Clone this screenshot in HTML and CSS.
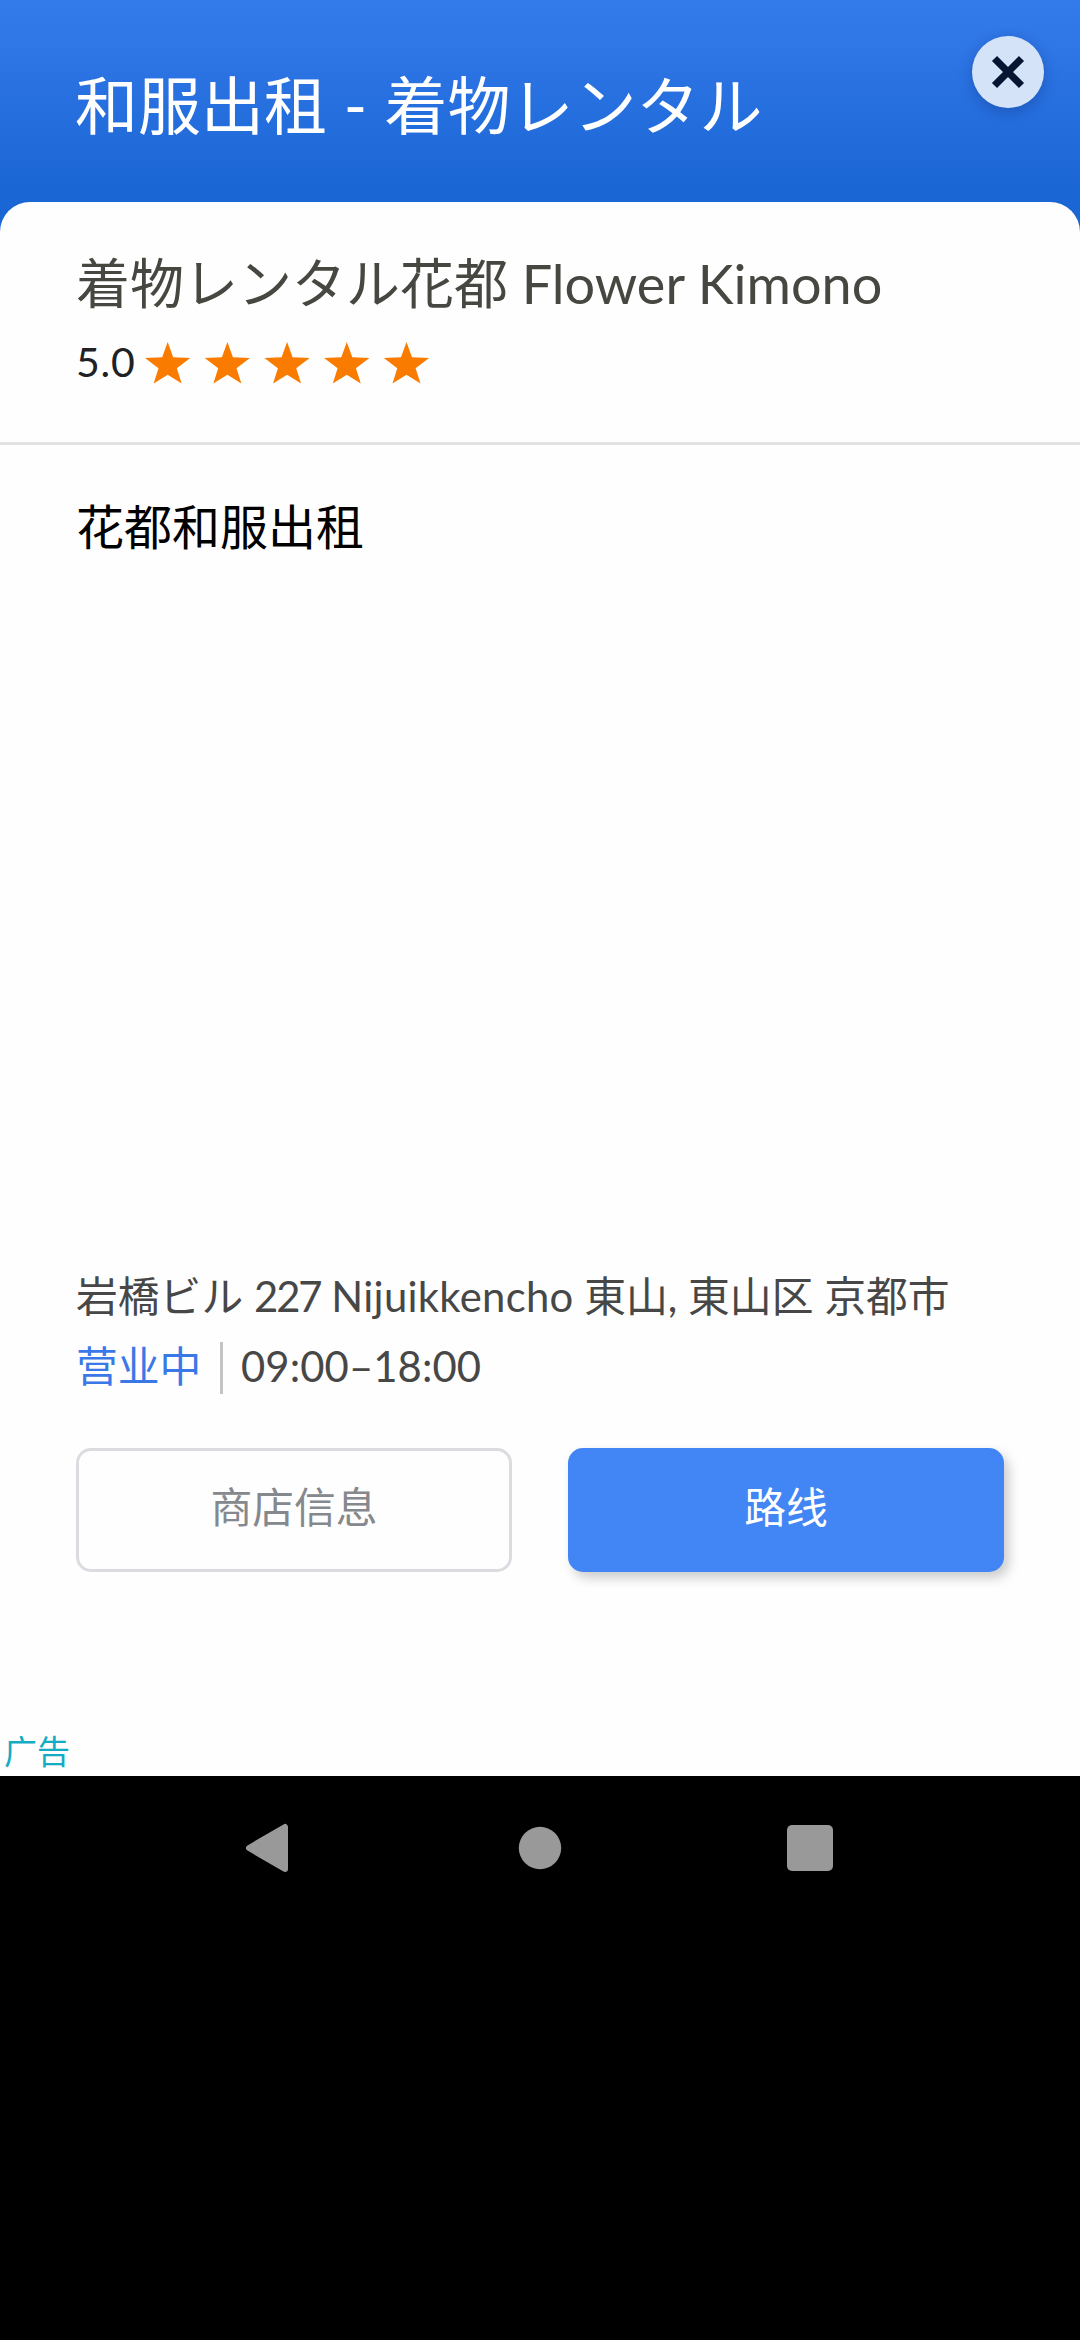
FILE: index.html
```html
<!DOCTYPE html>
<html lang="zh-CN">
<head>
<meta charset="utf-8">
<title>和服出租 - 着物レンタル</title>
<link rel="stylesheet" href="styles.css">
</head>
<body>
<main class="ad">
  <header class="header">
    <h1 class="title">和服出租<span class="dash"> - </span>着物レンタル</h1>
    <button class="close" aria-label="关闭"><svg width="72" height="72" viewBox="0 0 72 72"><path d="M22.500 22.500L49.500 49.500M49.500 22.500L22.500 49.500" stroke="#061632" stroke-width="7.200"/></svg></button>
  </header>
  <section class="card">
    <div class="shop">
      <h2 class="name"><span lang="ja">着物レンタル花都</span> Flower Kimono</h2>
      <div class="rating">
        <span class="score">5.0</span>
        <svg class="stars" width="286" height="42" viewBox="0 0 286 42" fill="#f97c00">
          <defs><path id="star" d="M22.700 0L28.200 15.300L45.300 16L31.800 26.200L36.700 41.500L22.700 32.800L8.700 41.500L13.500 26.200L0 16L17.200 15.300Z"/></defs>
          <use href="#star"/><use href="#star" x="59.700"/><use href="#star" x="119.400"/><use href="#star" x="179.100"/><use href="#star" x="238.800"/>
        </svg>
      </div>
    </div>
    <p class="description">花都和服出租</p>
    <div class="details">
      <p class="address" lang="ja">岩橋ビル <span class="number">227</span> <span class="street">Nijuikkencho</span> 東山, 東山区 京都市</p>
      <div class="hours"><span class="open">营业中</span><span class="time">09:00–18:00</span></div>
      <div class="actions">
        <button class="button">商店信息</button>
        <button class="button primary">路线</button>
      </div>
    </div>
    <div class="label">广告</div>
  </section>
</main>
<nav class="navbar">
  <svg width="50" height="50" viewBox="0 0 50 50"><path d="M6 25L42 4V46Z" fill="#999" stroke="#999" stroke-width="6" stroke-linejoin="round"/></svg>
  <svg width="50" height="50" viewBox="0 0 50 50"><circle cx="26" cy="25" r="21.200" fill="#999"/></svg>
  <svg width="50" height="50" viewBox="0 0 50 50"><rect x="2" y="2" width="46" height="46" rx="5" fill="#999"/></svg>
</nav>
</body>
</html>
```
FILE: styles.css
```css
* { box-sizing: border-box; }

body {
  margin: 0;
  min-height: 2340px;
  background: #000;
  font-family: Lato, "Noto Sans CJK SC", sans-serif;
}

h1, h2, p { margin: 0; font-weight: 400; white-space: nowrap; }

[lang="ja"] { font-family: Lato, "Noto Sans CJK JP", sans-serif; }

.ad {
  height: 1776px;
  display: flex;
  flex-direction: column;
  background: linear-gradient(#337aea 0, #2f76e6 45px, #1b66d5 185px, #1b66d5 240px);
}

.header {
  height: 202px;
  display: flex;
  justify-content: space-between;
  align-items: flex-start;
  padding: 36px 36px 0 75px;
}

.title {
  margin-top: 29px;
  font-size: 63px;
  line-height: 80px;
  color: #fff;
}

.dash { letter-spacing: .6px; }

.close {
  width: 72px;
  height: 72px;
  padding: 0;
  border: 0;
  border-radius: 50%;
  background: #d5e3f9;
  box-shadow: 0 4px 14px rgba(0, 20, 80, .25);
}

.close svg { display: block; }

.card {
  flex: 1;
  display: flex;
  flex-direction: column;
  border-radius: 30px 30px 0 0;
  background: #fefefe;
}

.shop {
  height: 243px;
  padding: 46px 76px 0;
  border-bottom: 3px solid #e2e2e2;
}

.name {
  font-size: 54px;
  line-height: 72px;
  color: #474741;
}

.rating {
  display: flex;
  align-items: center;
  height: 85px;
}

.score {
  width: 69px;
  padding-bottom: 2px;
  font-size: 41px;
  letter-spacing: .8px;
  color: #202124;
}

.description {
  padding: 46px 76px 0;
  font-size: 48px;
  line-height: 72px;
  color: #000;
}

.details {
  margin-top: auto;
  padding: 0 76px;
}

.address, .hours {
  font-size: 41.800px;
  color: #474747;
}

.address { line-height: 64px; }

.number { letter-spacing: -2px; }

.street { letter-spacing: .3px; }

.hours {
  display: flex;
  align-items: center;
  height: 52px;
  margin-top: 14px;
}

.open {
  width: 147px;
  height: 52px;
  line-height: 49px;
  border-right: 3px solid #c3c3c3;
  color: #3b78e7;
}

.time {
  height: 52px;
  padding-left: 18px;
  line-height: 48px;
  letter-spacing: .1px;
}

.actions {
  display: grid;
  grid-template-columns: 436px 436px;
  gap: 56px;
  margin-top: 54px;
}

.button {
  height: 124px;
  padding: 0 0 6px;
  border: 3px solid #dadce0;
  border-radius: 15px;
  background: none;
  font: 41.800px/60px Lato, "Noto Sans CJK SC", sans-serif;
  color: #85888c;
}

.primary {
  border-color: #4285f4;
  background: #4285f4;
  color: #fff;
  box-shadow: 5px 6px 12px rgba(0, 0, 0, .2);
}

.label {
  margin-top: 158px;
  padding-left: 4px;
  height: 46px;
  font-size: 33px;
  line-height: 42px;
  color: #13acc5;
}

.navbar {
  display: flex;
  justify-content: space-between;
  padding: 47px 245px 0 243px;
}
```
